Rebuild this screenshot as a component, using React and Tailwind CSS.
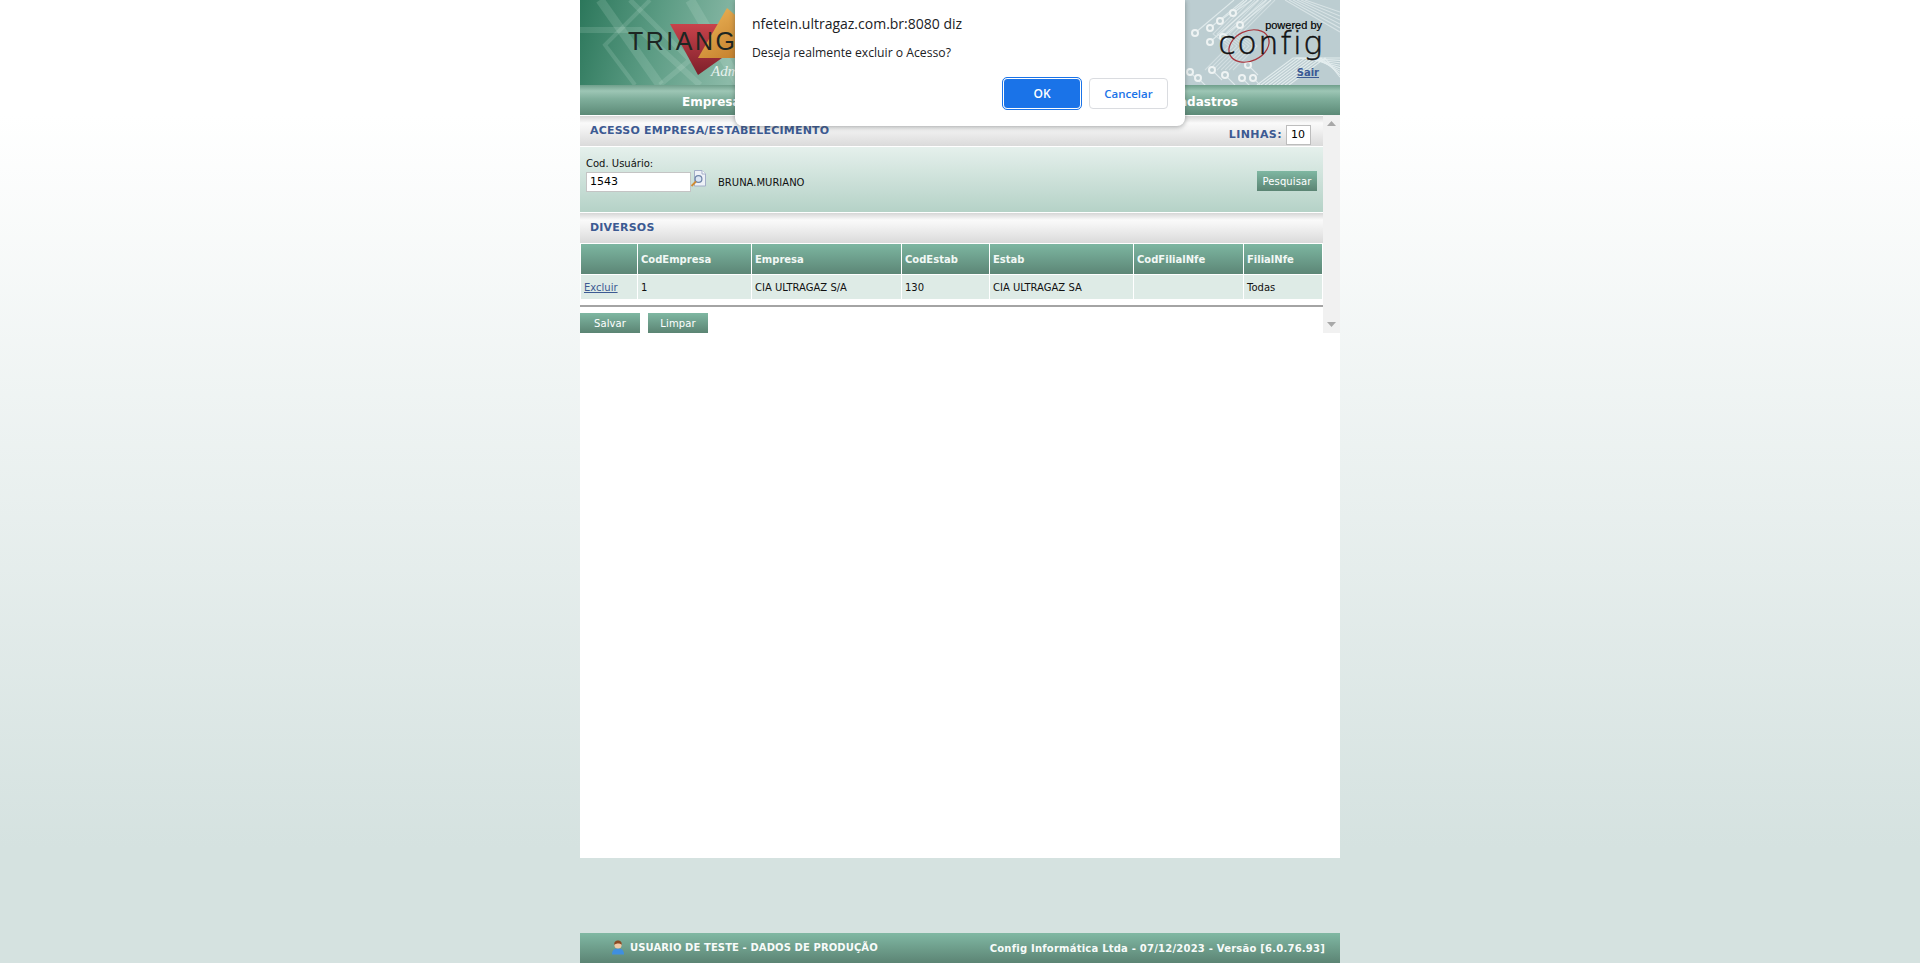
const V = { fontFamily: '"DejaVu Sans", Verdana, sans-serif' };

function LeftBanner() {
  return (
    <div className="relative w-[190px] h-full overflow-hidden bg-[linear-gradient(105deg,#2c775b_0%,#5c9c84_40%,#a3c9ba_100%)]">
      <svg className="absolute inset-0" width="190" height="85" viewBox="0 0 190 85">
        <defs>
          <linearGradient id="org" x1="0" y1="0" x2="1" y2="1">
            <stop offset="0" stopColor="#eeb75a" />
            <stop offset="1" stopColor="#b9701f" />
          </linearGradient>
          <linearGradient id="red" x1="0" y1="0" x2="0" y2="1">
            <stop offset="0" stopColor="#c8434b" />
            <stop offset="1" stopColor="#7d1f2a" />
          </linearGradient>
        </defs>
        <g stroke="#d5ebe2" strokeOpacity="0.16" fill="none">
          <path d="M20 0 L80 85" strokeWidth="9" />
          <path d="M50 0 L110 60 L80 85" strokeWidth="5" />
          <path d="M70 0 L25 45 L55 85" strokeWidth="4" />
          <path d="M0 30 L60 30 L120 85" strokeWidth="6" />
          <path d="M110 0 L160 85" strokeWidth="10" />
        </g>
        <polygon points="90,24 118,75 190,24" fill="url(#red)" />
        <polygon points="147,8 118,58 190,58 190,45" fill="url(#org)" />
      </svg>
      <span className="absolute left-[48px] top-[26px] text-[25px] leading-[30px] tracking-[2.5px] text-[#1d2622]" style={{ fontFamily: '"Liberation Sans", sans-serif' }}>TRIANG</span>
      <span className="absolute left-[131px] top-[62px] text-[15px] leading-[18px] italic text-[#e8f2ee]" style={{ fontFamily: '"Liberation Serif", serif' }}>Adm</span>
    </div>
  );
}

function RightBanner() {
  const rings = [[10, 33], [25, 28], [35, 21], [48, 13], [25, 42], [38, 37], [55, 25], [5, 72], [13, 78], [27, 70], [40, 75], [63, 65], [68, 78], [57, 78]];
  return (
    <div className="relative w-[155px] h-full overflow-hidden bg-[#bccdd1]">
      <svg className="absolute inset-0" width="155" height="85" viewBox="0 0 155 85">
        <g stroke="#e4edee" strokeWidth="1.1" fill="none">
          {rings.slice(0, 7).map(([x, y], i) => (
            <path key={i} d={`M${x} ${y} L${x + y + 6} 0`} strokeOpacity="0.85" />
          ))}
          {rings.slice(7).map(([x, y], i) => (
            <path key={i} d={`M${x} ${y} L${x + 10} ${y + 10}`} strokeOpacity="0.85" />
          ))}
          {[0, 4, 8, 12, 16, 20, 24, 28].map((d) => (
            <path key={d} d={`M${62 + d} 0 L${28 + d} 34 L${44 + d} 46 L${20 + d} 70`} strokeOpacity="0.55" />
          ))}
          {[0, 4, 8, 12, 16, 20, 24, 28, 32].map((d) => (
            <path key={d} d={`M${72 + d} 85 L${108 + d} 58 L${155} ${58 + d * 0.6}`} strokeOpacity="0.95" />
          ))}
          {[0, 4, 8, 12, 16, 20].map((d) => (
            <path key={d} d={`M${100 + d} 0 L${155} ${32 - d}`} strokeOpacity="0.7" />
          ))}
        </g>
        {rings.map(([x, y], i) => (
          <circle key={i} cx={x} cy={y} r="3" fill="#bccdd1" stroke="#eef3f3" strokeWidth="2" />
        ))}
        <ellipse cx="64" cy="46" rx="21" ry="15" transform="rotate(-25 64 46)" fill="none" stroke="#a8353d" strokeWidth="1.2" />
      </svg>
      <span className="absolute right-[18px] top-[19px] text-[11px] leading-[12px] text-black" style={{ fontFamily: '"Liberation Sans", sans-serif', WebkitTextStroke: '0.2px black' }}>powered by</span>
      <span className="absolute right-[16px] top-[31px] text-[32px] leading-[24px] tracking-[1.5px] text-[#111]" style={{ fontFamily: '"DejaVu Sans", sans-serif', fontWeight: 200, fontVariantLigatures: 'none', WebkitTextStroke: '0.5px #111' }}>config</span>
      <a className="absolute right-[21px] top-[66px] text-[10px] leading-[14px] font-bold underline text-[#3b5a94]" style={V}>Sair</a>
    </div>
  );
}

function SectionHeader({ title, children }) {
  return (
    <div className="h-[31px] flex items-center justify-between pl-[10px] pr-[12px] border-b border-white bg-[linear-gradient(#d6d6d6_0px,#fafafa_7px,#f4f4f4_12px,#dadada_100%)]">
      <span className="mt-[1px] text-[11px] font-bold tracking-[0.2px] text-[#3c5a92]" style={V}>{title}</span>
      {children}
    </div>
  );
}

function GreenButton({ children, className }) {
  return (
    <button className={`h-[20px] w-[60px] text-[10px] tracking-[0.1px] text-white bg-[linear-gradient(#7fb7a2,#5b8473)] ${className || ''}`} style={V}>
      {children}
    </button>
  );
}

const cols = [
  ['', '', 'w-[56px]'],
  ['CodEmpresa', '1', 'w-[113px]'],
  ['Empresa', 'CIA ULTRAGAZ S/A', 'w-[149px]'],
  ['CodEstab', '130', 'w-[87px]'],
  ['Estab', 'CIA ULTRAGAZ SA', 'w-[143px]'],
  ['CodFilialNfe', '', 'w-[109px]'],
  ['FilialNfe', 'Todas', 'w-[78px]'],
];

function DataTable() {
  return (
    <div className="pl-px w-[743px]">
      <div className="flex gap-px h-[30px]">
        {cols.map(([h, , w], i) => (
          <div key={i} className={`${w} shrink-0 pl-[3px] flex items-center text-[10px] font-bold text-[#f2f8f5] bg-[linear-gradient(#7db6a1,#5c8676)]`} style={V}>{h}</div>
        ))}
      </div>
      <div className="flex gap-px h-[24px] mt-px">
        {cols.map(([, d, w], i) => (
          <div key={i} className={`${w} shrink-0 pl-[3px] flex items-center text-[10px] text-[#111] bg-[#deebe6]`} style={V}>
            {i === 0 ? <a className="underline text-[#3c5a92]">Excluir</a> : d}
          </div>
        ))}
      </div>
    </div>
  );
}

function Scrollbar() {
  return (
    <div className="w-[17px] bg-[#f1f1f1] flex flex-col items-center justify-between py-[6px]">
      <svg width="9" height="5" viewBox="0 0 9 5"><polygon points="4.5,0 9,5 0,5" fill="#a8a8a8" /></svg>
      <svg width="9" height="5" viewBox="0 0 9 5"><polygon points="0,0 9,0 4.5,5" fill="#a8a8a8" /></svg>
    </div>
  );
}

function Dialog() {
  return (
    <div className="absolute left-[735px] top-0 w-[450px] h-[126px] bg-white rounded-b-[8px] shadow-[0_1px_5px_rgba(60,64,67,0.45)] px-[17px]" style={{ fontFamily: '"Open Sans", sans-serif' }}>
      <div className="pt-[14px] text-[14px] leading-[20px] text-[#202124]">nfetein.ultragaz.com.br:8080 diz</div>
      <div className="mt-[10px] text-[12.2px] leading-[18px] text-[#202124]">Deseja realmente excluir o Acesso?</div>
      <div className="mt-[16px] flex justify-end items-center gap-[8px]">
        <button className="w-[78px] h-[31px] rounded-[4px] bg-[#1a73e8] text-white text-[12px] font-semibold outline-1 outline-[#1a73e8] border border-white">OK</button>
        <button className="w-[79px] h-[31px] rounded-[4px] bg-white text-[#1a73e8] text-[11.5px] font-semibold border border-[#dadce0]">Cancelar</button>
      </div>
    </div>
  );
}

export default function App() {
  return (
    <div className="relative h-[963px] overflow-hidden bg-[linear-gradient(#ffffff_0%,#ffffff_12%,#d5e2e0_88%,#d5e2e0_100%)]">
      <div className="w-[760px] mx-auto h-full flex flex-col">
        <div className="bg-white h-[858px] flex flex-col">
          <div className="h-[85px] flex justify-between bg-[#8fb4a8]">
            <LeftBanner />
            <RightBanner />
          </div>
          <div className="h-[30px] flex items-center justify-between pl-[102px] pr-[102px] pt-[3px] bg-[linear-gradient(#6f9f8b_0px,#9dc6b5_6px,#7fae9b_14px,#5c8a77_100%)] text-[12px] font-bold text-white" style={V}>
            <span>Empresa</span>
            <span>Cadastros</span>
          </div>
          <div className="flex h-[218px]">
            <div className="w-[743px] pt-px">
              <SectionHeader title="ACESSO EMPRESA/ESTABELECIMENTO">
                <span className="flex items-center gap-[4px] mt-[8px]">
                  <span className="text-[11px] font-bold tracking-[0.4px] text-[#3c5a92]" style={V}>LINHAS:</span>
                  <span className="w-[25px] h-[20px] pl-[4px] flex items-center bg-white border border-[#bdbdbd] text-[11px] text-black" style={V}>10</span>
                </span>
              </SectionHeader>
              <div className="h-[66px] flex items-start justify-between pl-[6px] pr-[6px] pt-[10px] border-b border-white bg-[linear-gradient(#e5f0ec,#b5d2c7)] relative">
                <div>
                  <div className="text-[10px] leading-[13px] text-[#111]" style={V}>Cod. Usuário:</div>
                  <div className="flex items-center mt-[2px]">
                    <div className="w-[105px] h-[20px] pl-[3px] flex items-center bg-white border border-[#c4c4c4] text-[11px] text-black" style={V}>1543</div>
                    <svg className="-ml-[1px] -mt-[7px]" width="16" height="17" viewBox="0 0 16 17">
                      <path d="M4.500 .5h7.500l3.500 3.500v12h-11z" fill="#eef1f7" stroke="#a3aec8" />
                      <path d="M12 .5v3.500h3.500" fill="#fff" stroke="#a3aec8" />
                      <circle cx="8.500" cy="9" r="3.400" fill="#dde6f3" stroke="#6d84a8" strokeWidth="1.200" />
                      <path d="M6 11.500 1.500 16" stroke="#d08a32" strokeWidth="1.800" />
                    </svg>
                    <span className="ml-[12px] text-[10px] text-[#111]" style={V}>BRUNA.MURIANO</span>
                  </div>
                </div>
                <GreenButton className="mt-[14px]">Pesquisar</GreenButton>
              </div>
              <SectionHeader title="DIVERSOS" />
              <DataTable />
              <div className="mt-[6px] h-[2px] bg-[#a4a4a4]" />
              <div className="mt-[6px] flex gap-[8px]">
                <GreenButton>Salvar</GreenButton>
                <GreenButton>Limpar</GreenButton>
              </div>
            </div>
            <Scrollbar />
          </div>
        </div>
        <div className="flex-1" />
        <div className="h-[30px] flex items-center justify-between pl-[31px] pr-[15px] bg-[linear-gradient(#80b8a3,#5c8474)] text-[10px] font-bold text-[#f7fbf9]" style={V}>
          <span className="flex items-center gap-[5px] tracking-[0.1px] -mt-[2px]">
            <svg width="14" height="15" viewBox="0 0 14 15">
              <path d="M1 14.500c0-4 2-6 6-6s6 2 6 6z" fill="#3f8fe0" />
              <circle cx="7" cy="5" r="3.600" fill="#f0c9a5" />
              <path d="M3.200 5C3 1.500 5 .5 7 .5s4 1 3.800 4.500C9.500 3 5 3 3.200 5z" fill="#8a4a24" />
            </svg>
            USUARIO DE TESTE - DADOS DE PRODUÇÃO
          </span>
          <span className="tracking-[0.22px]">Config Informática Ltda - 07/12/2023 - Versão [6.0.76.93]</span>
        </div>
      </div>
      <Dialog />
    </div>
  );
}
